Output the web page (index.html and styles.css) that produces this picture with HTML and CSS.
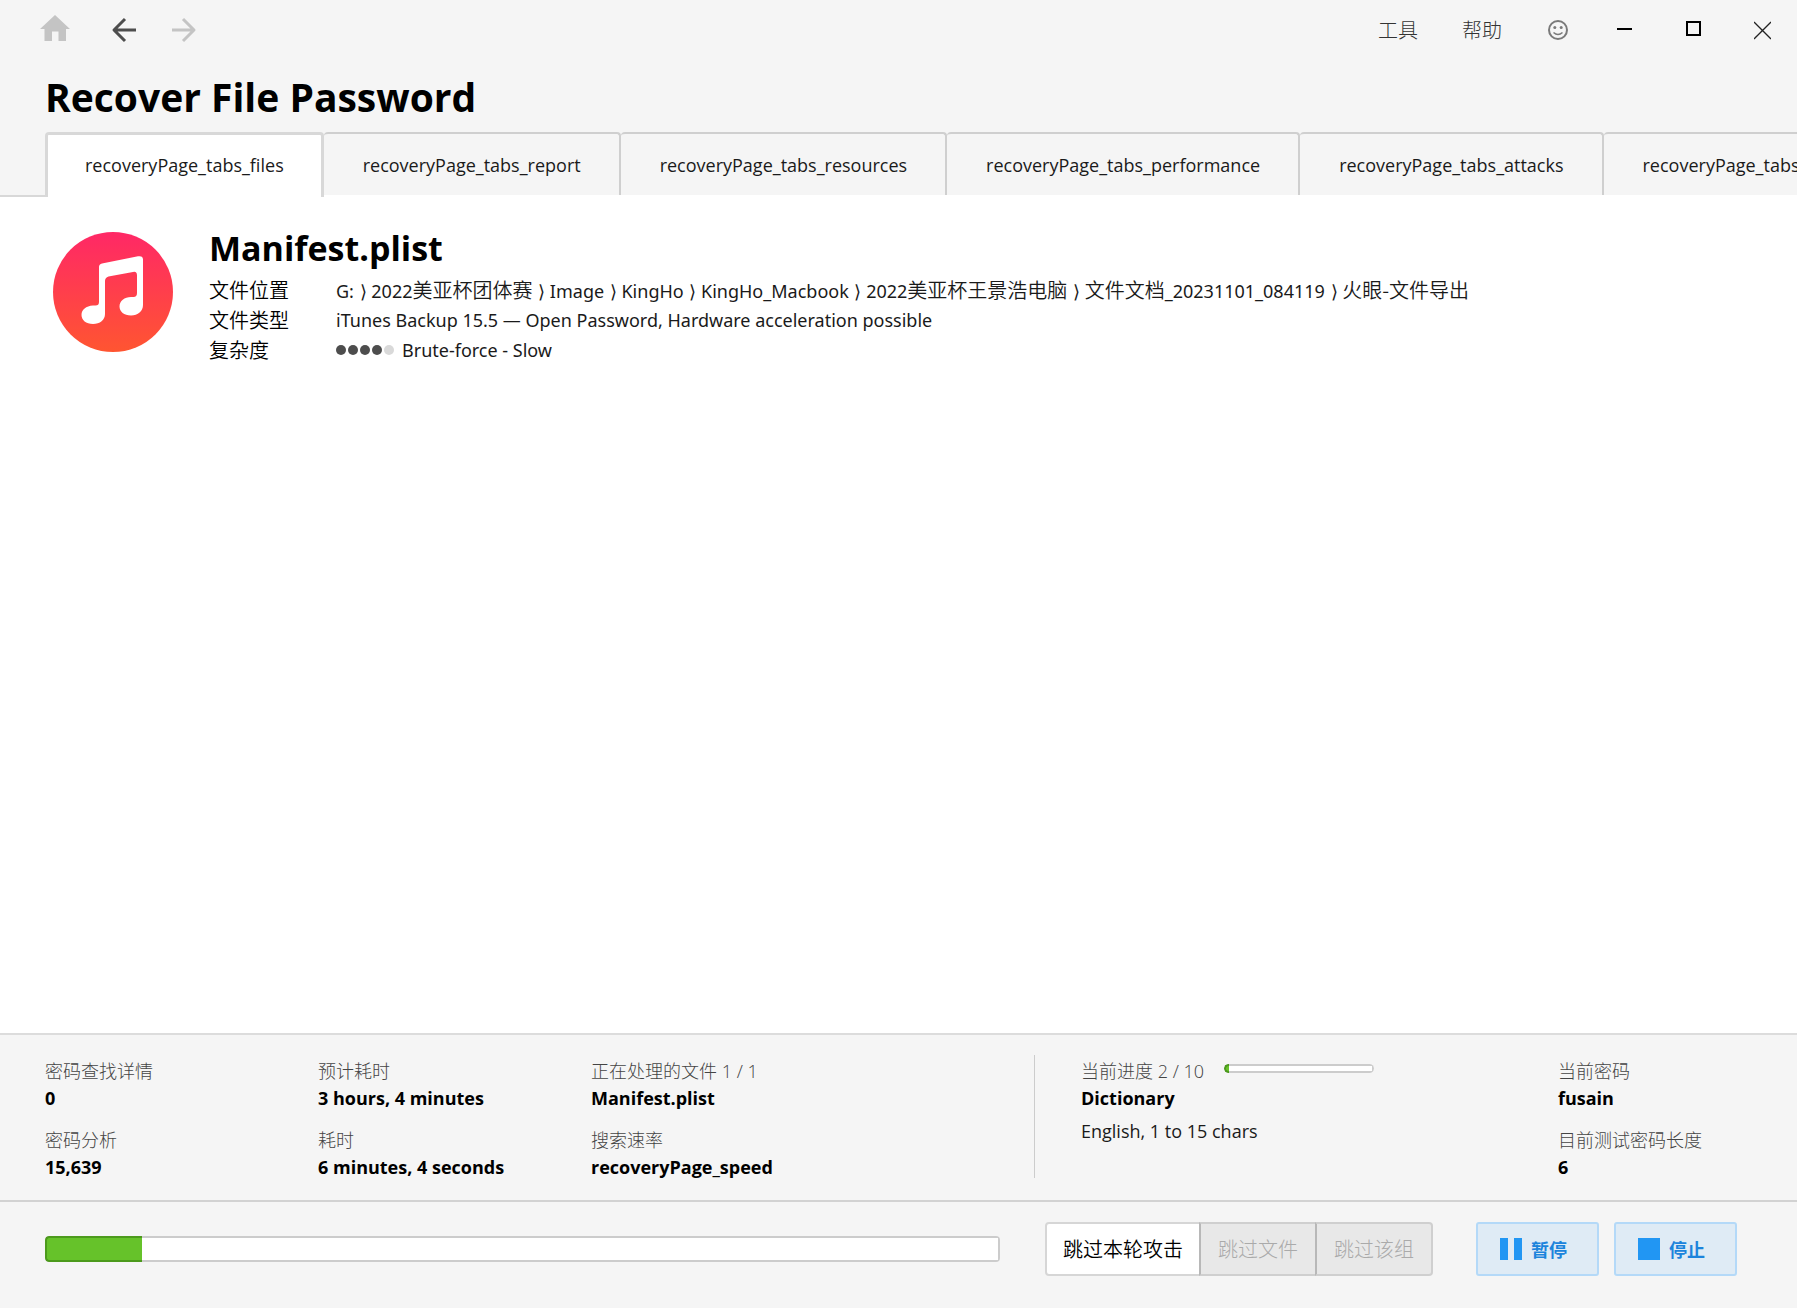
FILE: index.html
```html
<!DOCTYPE html>
<html lang="zh-CN">
<head>
<meta charset="utf-8">
<title>Recover File Password</title>
<link rel="stylesheet" href="styles.css">
</head>
<body>
<header class="titlebar">
  <nav class="history">
    <button class="icon-button" aria-label="Home">
      <svg width="30" height="30" viewBox="0 0 30 30"><path fill="#c4c4c4" d="M15 0 30 14H26V26H18.500V16.500H12V26H4.500V14H0Z"/></svg>
    </button>
    <button class="icon-button" aria-label="Back">
      <svg width="26" height="30" viewBox="0 0 26 30"><path fill="none" stroke="#4d4d4d" stroke-width="3" stroke-linejoin="round" d="M25 15H3M14 4 3 15 14 26"/></svg>
    </button>
    <button class="icon-button" aria-label="Forward" disabled>
      <svg width="26" height="30" viewBox="0 0 26 30"><path fill="none" stroke="#c4c4c4" stroke-width="3" stroke-linejoin="round" d="M0 15H22M11 4 22 15 11 26"/></svg>
    </button>
  </nav>
  <div class="window-menu">
    <button class="menu-button">工具</button>
    <button class="menu-button">帮助</button>
    <button class="icon-button smiley" aria-label="Feedback">
      <svg width="20" height="20" viewBox="0 0 20 20"><g fill="none" stroke="#7a7a7a" stroke-width="2"><circle cx="10" cy="10" r="9"/><path stroke-width="1.500" d="M5.500 12.500Q10 16.500 14.500 12.500"/></g><circle cx="6.800" cy="7.500" r="1.500" fill="#7a7a7a"/><circle cx="13.200" cy="7.500" r="1.500" fill="#7a7a7a"/></svg>
    </button>
    <button class="icon-button" aria-label="Minimize">
      <svg width="17" height="20" viewBox="0 0 17 20"><path fill="#000" d="M1 8H16V10H1Z"/></svg>
    </button>
    <button class="icon-button" aria-label="Maximize">
      <svg width="17" height="20" viewBox="0 0 17 20"><path fill="none" stroke="#000" stroke-width="2" d="M2 2H15V15H2Z"/></svg>
    </button>
    <button class="icon-button" aria-label="Close">
      <svg width="17" height="20" viewBox="0 0 17 20"><path fill="none" stroke="#222" stroke-width="1.300" d="M0 2 17 19M17 2 0 19"/></svg>
    </button>
  </div>
</header>
<h1 class="page-title">Recover File Password</h1>
<div class="tabs" role="tablist">
  <button class="tab active" role="tab" aria-selected="true">recoveryPage_tabs_files</button>
  <button class="tab" role="tab">recoveryPage_tabs_report</button>
  <button class="tab" role="tab">recoveryPage_tabs_resources</button>
  <button class="tab" role="tab">recoveryPage_tabs_performance</button>
  <button class="tab" role="tab">recoveryPage_tabs_attacks</button>
  <button class="tab last" role="tab">recoveryPage_tabs</button>
</div>
<main class="file">
  <svg class="file-icon" width="120" height="120" viewBox="0 0 120 120">
    <defs><linearGradient id="music" x1="0" y1="0" x2="0" y2="1"><stop offset="0" stop-color="#ff2866"/><stop offset="1" stop-color="#ff5531"/></linearGradient></defs>
    <circle cx="60" cy="60" r="60" fill="url(#music)"/>
    <path fill="#fff" d="M49 31.500 85 24.300Q90 23.500 90 27.500V73C90 79 85 83.500 78 83.500C71 83.500 66.500 79.500 66.500 74.500C66.500 69 71.500 65 78 65H80.500Q84 65 84 61V43.500Q84 39 80 40L55.500 44.500Q52 45.500 52 49V82C52 88 47 92 40 92C33 92 28.500 88 28.500 83C28.500 77.500 33 74 40 73.500H42.500Q46 73.500 46 70V35Q46 32 49 31.500Z"/>
  </svg>
  <div class="file-info">
    <h2 class="file-name">Manifest.plist</h2>
    <dl class="file-meta">
      <dt>文件位置</dt>
      <dd>G: <span class="sep">⟩</span> 2022<span class="zh">美亚杯团体赛</span> <span class="sep">⟩</span> Image <span class="sep">⟩</span> KingHo <span class="sep">⟩</span> KingHo_Macbook <span class="sep">⟩</span> 2022<span class="zh">美亚杯王景浩电脑</span> <span class="sep">⟩</span> <span class="zh">文件文档</span>_20231101_084119 <span class="sep">⟩</span> <span class="zh">火眼-文件导出</span></dd>
      <dt>文件类型</dt>
      <dd>iTunes Backup 15.5 — Open Password, Hardware acceleration possible</dd>
      <dt>复杂度</dt>
      <dd class="complexity">
        <span class="dots"><i class="dot"></i><i class="dot"></i><i class="dot"></i><i class="dot"></i><i class="dot off"></i></span>
        Brute-force - Slow
      </dd>
    </dl>
  </div>
</main>
<footer>
  <section class="stats">
    <dl class="stat-group totals">
      <div><dt>密码查找详情</dt><dd>0</dd></div>
      <div><dt>预计耗时</dt><dd>3 hours, 4 minutes</dd></div>
      <div><dt>正在处理的文件 1 / 1</dt><dd>Manifest.plist</dd></div>
      <div><dt>密码分析</dt><dd>15,639</dd></div>
      <div><dt>耗时</dt><dd>6 minutes, 4 seconds</dd></div>
      <div><dt>搜索速率</dt><dd>recoveryPage_speed</dd></div>
    </dl>
    <div class="attack">
      <div class="attack-head"><label for="step">当前进度 2 / 10</label><progress class="bar small" id="step" value="3" max="100"></progress></div>
      <strong class="attack-name">Dictionary</strong>
      <p class="attack-note">English, 1 to 15 chars</p>
    </div>
    <dl class="stat-group current">
      <div><dt>当前密码</dt><dd>fusain</dd></div>
      <div><dt>目前测试密码长度</dt><dd>6</dd></div>
    </dl>
  </section>
  <section class="actions">
    <progress class="bar total" value="10.2" max="100" aria-label="Progress"></progress>
    <div class="skip-group">
      <button class="skip">跳过本轮攻击</button>
      <button class="skip" disabled>跳过文件</button>
      <button class="skip" disabled>跳过该组</button>
    </div>
    <div class="run-group">
      <button class="run"><svg width="22" height="22" viewBox="0 0 22 22"><path fill="#2196f3" d="M0 0H8V22H0ZM14 0H22V22H14Z"/></svg>暂停</button>
      <button class="run"><svg width="22" height="22" viewBox="0 0 22 22"><path fill="#2196f3" d="M0 0H22V22H0Z"/></svg>停止</button>
    </div>
  </section>
</footer>
</body>
</html>
```
FILE: styles.css
```css
* { box-sizing: border-box; }
html, body { height: 100%; }
body {
  margin: 0;
  display: flex;
  flex-direction: column;
  background: #f5f5f5;
  color: #000;
  font: 18px/30px "Open Sans", "Noto Sans CJK SC DemiLight", "Noto Sans CJK SC", sans-serif;
}
button { margin: 0; padding: 0; border: 0; background: none; color: inherit; font: inherit; }
h1, h2, dl, dd, p { margin: 0; }
svg { display: block; }

.titlebar { display: flex; justify-content: space-between; align-items: center; height: 60px; padding: 0 26px 0 40px; }
.history { display: flex; align-items: center; gap: 35px; }
.history .icon-button:first-child { margin-right: 6px; }
.window-menu { display: flex; align-items: center; gap: 52px; }
.menu-button { font: 20px/30px "Noto Sans CJK SC Light", "Noto Sans CJK SC", sans-serif; color: #333; }
.menu-button + .menu-button { margin-left: -8px; }
.smiley { margin: 0 -4px 0 -6px; }

.page-title { padding: 7px 45px 5px; font-size: 39px; line-height: 60px; font-weight: 700; }

.tabs {
  display: flex;
  flex: none;
  height: 65px;
  padding-left: 45px;
  overflow: hidden;
  background: linear-gradient(#d8d8d8, #d8d8d8) 0 63px / 47px 2px no-repeat, linear-gradient(#fff, #fff) 0 63px / 100% 2px no-repeat;
}
.tab { flex: none; height: 63px; padding: 0 38px 0 39px; border: solid #cfcfcf; border-width: 2px 2px 0 0; border-radius: 4px 4px 0 0; color: #1a1a1a; white-space: nowrap; }
.tab.active { height: 65px; border-color: #d8d8d8; border-width: 3px 3px 0 3px; padding: 0 37px 2px; background: #fff; }
.tab.last { border-right: 0; }

.file { flex: 1; display: flex; align-items: flex-start; gap: 36px; padding: 35px 45px 0 53px; background: #fff; }
.file-icon { flex: none; }
.file-name { font-size: 34px; line-height: 32px; font-weight: 700; padding-bottom: 11px; }
.file-meta { display: grid; grid-template-columns: 127px 1fr; }
.file-meta dt, .zh { font-family: "Noto Sans CJK SC DemiLight", "Noto Sans CJK SC", sans-serif; font-size: 20px; line-height: 30px; }
.file-meta dt, .file-meta dd { height: 30px; white-space: nowrap; }
.file-meta dd { font-family: "Noto Sans", "Noto Sans CJK SC", sans-serif; color: #1a1a1a; }
.sep { margin-left: 1px; }
.complexity { display: flex; gap: 8px; }
.dots { display: flex; align-items: center; gap: 2px; }
.dot { width: 10px; height: 10px; border-radius: 5px; background: #4d4d4d; }
.dot.off { background: #d9d9d9; }

.stats { display: flex; border-top: 2px solid #dcdcdc; padding: 20px 45px 22px; }
.stat-group dt, .attack label { font-family: "Open Sans Light", "Noto Sans CJK SC Light", "Noto Sans CJK SC", sans-serif; font-weight: 300; font-size: 18px; line-height: 32px; color: #444; }
.stat-group dd, .attack-name { display: block; font-weight: 700; line-height: 22px; }
.totals { flex: none; width: 990px; display: grid; grid-template-columns: 273px 273px 1fr; row-gap: 15px; border-right: 1px solid #ccc; }
.attack { flex: 1; padding-left: 46px; }
.attack-head { display: flex; align-items: center; gap: 20px; height: 32px; }
.attack-note { padding-top: 7px; color: #1a1a1a; }
.current { flex: none; width: 194px; display: grid; row-gap: 15px; align-content: start; }

.bar { appearance: none; border: 0; overflow: hidden; }
.bar::-webkit-progress-bar { background: #fff; box-shadow: inset 0 0 0 2px #ccc; border-radius: inherit; }
.bar::-webkit-progress-value { background: #66c22a; border: 2px solid #4c9a1c; border-right: 0; }
.total { flex: 1; min-width: 0; height: 26px; border-radius: 4px; }
.total::-webkit-progress-value { border-radius: 4px 0 0 4px; }
.small { width: 150px; height: 9px; margin-bottom: 5px; border-radius: 5px; }
.small::-webkit-progress-value { border-radius: 5px 0 0 5px; }

.actions { display: flex; align-items: center; height: 108px; padding: 0 60px 12px 45px; border-top: 2px solid #d2d2d2; }
.skip-group { display: flex; margin-left: 45px; }
.skip { height: 54px; padding: 0 16px; border: 2px solid #d6d6d6; background: #fff; font: 20px/30px "Noto Sans CJK SC DemiLight", "Noto Sans CJK SC", sans-serif; }
.skip:disabled { padding: 0 17px; border-color: #cfcfcf; border-left: 2px solid #b8b8b8; background: #e8e8e8; color: #aaa; font-family: "Noto Sans CJK SC Light", "Noto Sans CJK SC", sans-serif; margin-left: -2px; }
.skip:first-child { border-radius: 4px 0 0 4px; }
.skip:last-child { border-radius: 0 4px 4px 0; }
.run-group { display: flex; gap: 15px; margin-left: 43px; }
.run { display: flex; align-items: center; gap: 9px; width: 123px; height: 54px; padding-left: 22px; border: 2px solid #b4d9f8; border-radius: 3px; background: #dfebf5; color: #1c84dc; font: 700 18px/30px "Noto Sans CJK SC", sans-serif; }
```
